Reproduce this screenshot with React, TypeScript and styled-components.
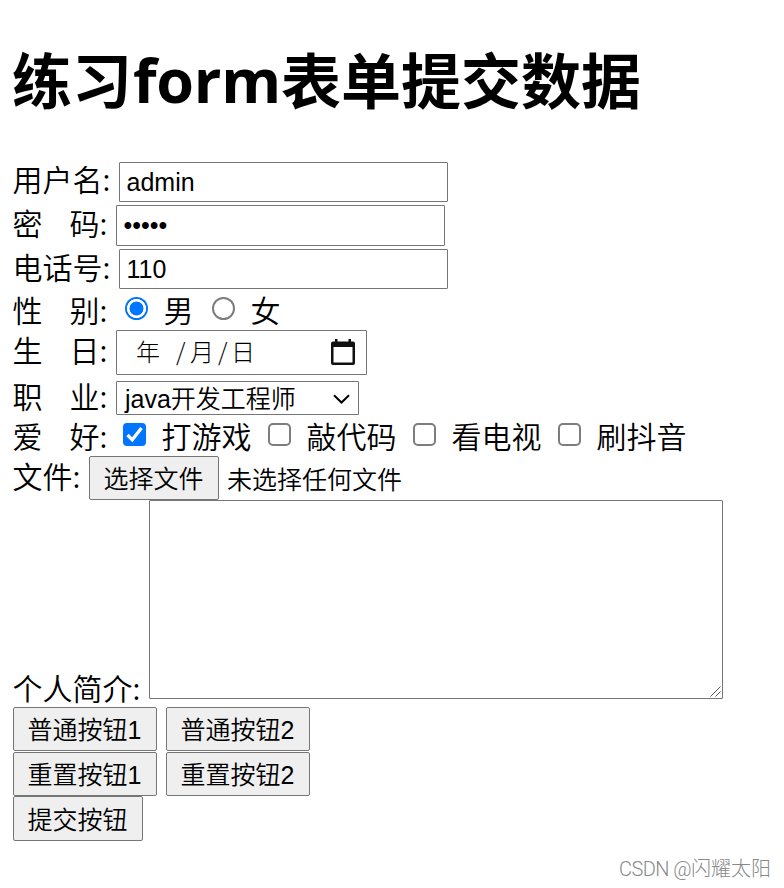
import React from "react";
import styled, { createGlobalStyle, css } from "styled-components";

const ui = `"Liberation Sans", "Noto Sans CJK SC", sans-serif`;

const GlobalStyle = createGlobalStyle`
  * { box-sizing: border-box; }
  body {
    margin: 0;
    background: #fff;
    color: #000;
    font-family: "Noto Sans CJK SC", sans-serif;
    font-size: 30px;
    font-weight: 350;
    overflow: hidden;
  }
`;

const Page = styled.main`
  width: 784px;
  height: 888px;
  padding-left: 12px;
  display: flex;
  flex-direction: column;
`;

const Title = styled.h1`
  margin: 0;
  height: 161px;
  padding-top: 33px;
  display: flex;
  align-items: baseline;
  font: 700 60px/90px "Noto Sans CJK SC", sans-serif;
  white-space: nowrap;
`;

const Latin = styled.span`
  width: 149px;
  padding-left: 1px;
  position: relative;
  top: -1px;
  font-family: "Open Sans", sans-serif;
  font-size: 61px;
  line-height: 60px;
  letter-spacing: -0.3px;
`;

const Row = styled.div<{ $h: number }>`
  height: ${(p) => p.$h}px;
  flex: none;
  display: flex;
  align-items: flex-start;
`;

const Label = styled.label<{ $w: number; $top: number; $inset?: number }>`
  width: ${(p) => p.$w}px;
  margin-top: ${(p) => p.$top}px;
  padding-left: ${(p) => p.$inset ?? 0}px;
  flex: none;
  display: flex;
  line-height: 30px;
  white-space: nowrap;
`;

const Spread = styled.span`
  margin-left: 27px;
`;

const Colon = styled.span`
  padding-top: 2px;
  font-family: "Open Sans", sans-serif;
  font-weight: 450;
`;

const Field = styled.input<{ $h?: number }>`
  width: 329px;
  height: ${(p) => p.$h ?? 40}px;
  margin: 1px 0 0;
  padding: 0 7px 0 6.5px;
  border: 1px solid #767676;
  border-radius: 1px;
  outline: none;
  background: #fff;
  color: #000;
  font: 400 25px ${ui};
`;

const choiceBase = css<{ $left: number; $top: number }>`
  appearance: none;
  width: 23px;
  height: 23px;
  flex: none;
  margin: ${(p) => p.$top}px 0 0 ${(p) => p.$left}px;
  border: 2px solid #7d7d7d;
  background: #fff;
`;

const Radio = styled.input.attrs({ type: "radio" })<{ $left: number; $top: number }>`
  ${choiceBase}
  border-radius: 50%;
  &:checked {
    border: none;
    background: radial-gradient(circle, #0075ff 6.6px, #fff 7.3px, #fff 9.2px, #0075ff 9.9px);
  }
`;

const CheckInput = styled.input.attrs({ type: "checkbox" })`
  appearance: none;
  width: 23px;
  height: 23px;
  margin: 0;
  border: 2px solid #7d7d7d;
  border-radius: 5px;
  background: #fff;
  &:checked {
    border: none;
    border-radius: 4px;
    background: #0075ff;
  }
`;

const CheckWrap = styled.span<{ $left: number }>`
  position: relative;
  display: flex;
  flex: none;
  margin: 8px 0 0 ${(p) => p.$left}px;
  svg { position: absolute; left: 0; top: 0; pointer-events: none; }
`;

const DateBox = styled.div`
  width: 251px;
  height: 45px;
  padding: 0 11px 3px 19px;
  display: flex;
  align-items: center;
  border: 1px solid #767676;
  border-radius: 1px;
  font: 200 24px/30px "Noto Sans CJK SC", sans-serif;
  color: #000;
  svg { margin: 2px 0 0 auto; }
`;

const DatePart = styled.span<{ $w: number }>`
  width: ${(p) => p.$w}px;
  white-space: pre;
`;

const SelectBox = styled.div`
  width: 243px;
  height: 34px;
  margin-top: 1px;
  padding: 1px 8px 0;
  display: flex;
  align-items: center;
  justify-content: space-between;
  border: 1px solid #767676;
  border-radius: 1px;
  font: 350 25px/30px ${ui};
`;

const Button = styled.button<{ $w: number; $h?: number }>`
  width: ${(p) => p.$w}px;
  height: ${(p) => p.$h ?? 44}px;
  flex: none;
  margin: 0 9px 0 0;
  padding: 2px 1px 0 0;
  border: 1px solid #767676;
  border-radius: 2px;
  background: #efefef;
  color: #000;
  font: 350 25px/30px ${ui};
  white-space: nowrap;
`;

const Controls = styled.div`
  display: flex;
  margin-left: 1px;
`;

const FileStatus = styled.span`
  margin: 9px 0 0 -1px;
  font: 350 25px/30px ${ui};
`;

const BioWrap = styled.div`
  position: relative;
  width: 574px;
  height: 199px;
  margin-left: 1px;
  svg { position: absolute; right: 2px; bottom: 2px; }
`;

const Bio = styled.textarea`
  display: block;
  width: 100%;
  height: 100%;
  margin: 0;
  border: 1px solid #767676;
  border-radius: 1px;
  outline: none;
  resize: none;
`;

const Watermark = styled.footer`
  margin: 15px 13px 0 0;
  text-align: right;
  font: 300 20px/24px "Noto Sans CJK SC", sans-serif;
  color: #888;
`;

const WatermarkLatin = styled.span`
  font-family: Roboto, sans-serif;
  letter-spacing: -0.55px;
`;

const CalendarIcon = () => (
  <svg width="24" height="26" viewBox="0 0 24 26">
    <path d="M4 0h2.500v2.500h11V0H20v2.500h2q2 0 2 2V24q0 2-2 2H2q-2 0-2-2V4.500q0-2 2-2h2ZM2.500 8v15.500h19V8Z" fill="#101010" fillRule="evenodd" />
  </svg>
);

const Chevron = () => (
  <svg width="17" height="10" viewBox="0 0 17 10">
    <path d="M1 1.200 8.500 8.500 16 1.200" fill="none" stroke="#000" strokeWidth="2" />
  </svg>
);

const Tick = () => (
  <svg width="23" height="23" viewBox="0 0 23 23">
    <path d="M4.500 12 9.300 16.800 18.500 5" fill="none" stroke="#fff" strokeWidth="3.300" />
  </svg>
);

const Grip = () => (
  <svg width="11" height="11" viewBox="0 0 11 11">
    <path d="M.5 10.500 10.500.5M5.500 10.500l5-5" fill="none" stroke="#555" strokeWidth="1" />
  </svg>
);

const hobbies = [
  { name: "打游戏", checked: true, left: 8 },
  { name: "敲代码", left: 16 },
  { name: "看电视", left: 16 },
  { name: "刷抖音", left: 16 },
];

const Name = ({ text, w, top }: { text: string; w: number; top: number }) => (
  <Label $w={w} $top={top} $inset={0.6}>
    {text}
    <Colon>:</Colon>
  </Label>
);

const Pair = ({ a, b, top }: { a: string; b: string; top: number }) => (
  <Label $w={103} $top={top} $inset={0.6}>
    {a}
    <Spread>{b}</Spread>
    <Colon>:</Colon>
  </Label>
);

export default function App() {
  return (
    <>
      <GlobalStyle />
      <Page>
        <Title>练习<Latin>form</Latin>表单提交数据</Title>
        <Row $h={43}>
          <Name text="用户名" w={106} top={2} />
          <Controls><Field defaultValue="admin" /></Controls>
        </Row>
        <Row $h={44}>
          <Pair a="密" b="码" top={3} />
          <Controls><Field type="password" defaultValue="admin" $h={41} /></Controls>
        </Row>
        <Row $h={43}>
          <Name text="电话号" w={106} top={3} />
          <Controls><Field defaultValue="110" /></Controls>
        </Row>
        <Row $h={39}>
          <Pair a="性" b="别" top={3} />
          <Radio name="sex" defaultChecked $left={10} $top={6} />
          <Label $w={64} $top={3} $inset={15.5}>男</Label>
          <Radio name="sex" $left={0} $top={6} />
          <Label $w={64} $top={3} $inset={15.5}>女</Label>
        </Row>
        <Row $h={50}>
          <Pair a="生" b="日" top={4} />
          <Controls>
            <DateBox>
              <DatePart $w={40}>年</DatePart>
              <DatePart $w={14}>/</DatePart>
              <DatePart $w={28}>月</DatePart>
              <DatePart $w={13}>/</DatePart>
              <DatePart $w={25}>日</DatePart>
              <CalendarIcon />
            </DateBox>
          </Controls>
        </Row>
        <Row $h={35}>
          <Pair a="职" b="业" top={0} />
          <Controls><SelectBox>java开发工程师<Chevron /></SelectBox></Controls>
        </Row>
        <Row $h={41}>
          <Pair a="爱" b="好" top={5} />
          {hobbies.map((h) => (
            <React.Fragment key={h.name}>
              <CheckWrap $left={h.left}>
                <CheckInput defaultChecked={h.checked} />
                {h.checked && <Tick />}
              </CheckWrap>
              <Label $w={106} $top={5} $inset={15.5}>{h.name}</Label>
            </React.Fragment>
          ))}
        </Row>
        <Row $h={44}>
          <Name text="文件" w={76} top={4} />
          <Controls>
            <Button $w={130}>选择文件</Button>
            <FileStatus>未选择任何文件</FileStatus>
          </Controls>
        </Row>
        <Row $h={207}>
          <Name text="个人简介" w={136} top={172} />
          <BioWrap>
            <Bio />
            <Grip />
          </BioWrap>
        </Row>
        <Row $h={45}>
          <Controls>
            <Button $w={144}>普通按钮1</Button>
            <Button $w={144}>普通按钮2</Button>
          </Controls>
        </Row>
        <Row $h={44}>
          <Controls>
            <Button $w={144}>重置按钮1</Button>
            <Button $w={144}>重置按钮2</Button>
          </Controls>
        </Row>
        <Row $h={45}>
          <Controls><Button $w={130} $h={45}>提交按钮</Button></Controls>
        </Row>
        <Watermark><WatermarkLatin>CSDN @</WatermarkLatin>闪耀太阳</Watermark>
      </Page>
    </>
  );
}
